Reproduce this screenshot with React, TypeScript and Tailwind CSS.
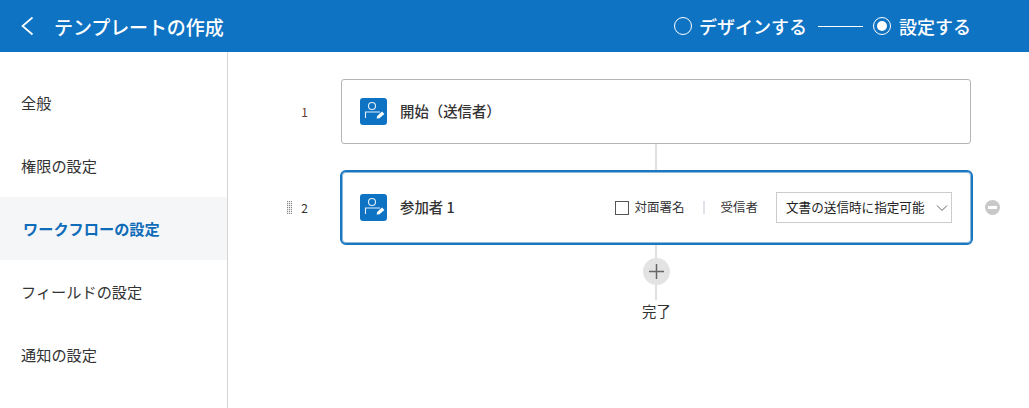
import React from "react";

const PersonIcon = () => (
  <span className="flex h-[27px] w-[27px] shrink-0 items-center justify-center rounded-[3px] bg-[#0f73c4]">
    <svg width="27" height="27" viewBox="0 0 27 27" fill="none">
      <circle cx="12" cy="8" r="3.5" stroke="#e2eff9" strokeWidth="1.1" />
      <path d="M5.5 20V14H20" stroke="#e2eff9" strokeWidth="1.1" />
      <path d="M16.6 20.6L17.2 18L22 13.6L24.4 16L19.4 20.2Z" fill="#fff" />
    </svg>
  </span>
);

const Grip = () => (
  <svg width="5" height="13" viewBox="0 0 5 13" className="mr-[9px]">
    {[0, 2, 4, 6, 8, 10, 12].map((y) =>
      [0, 2, 4].map((x) => <rect key={`${x}-${y}`} x={x} y={y} width="1.2" height="1.2" fill="#888" />)
    )}
  </svg>
);

const navItems = ["全般", "権限の設定", "ワークフローの設定", "フィールドの設定", "通知の設定"];

export default function App() {
  return (
    <div
      className="flex h-[408px] w-[1029px] flex-col overflow-hidden bg-white text-[#333]"
      style={{ fontFamily: '"Noto Sans CJK JP", "Noto Sans", sans-serif' }}
    >
      <header className="flex h-[52px] shrink-0 items-center bg-[#0f73c4] text-white">
        <svg width="16" height="22" viewBox="0 0 16 22" fill="none" className="ml-[19px]">
          <path d="M13.5 2.5L3.5 11L13.5 19.5" stroke="#fff" strokeWidth="1.7" />
        </svg>
        <h1 className="ml-[19px] text-[19px] font-medium leading-none tracking-[-0.1px]">テンプレートの作成</h1>
        <div className="ml-auto mr-[58px] flex items-center">
          <span className="h-[18px] w-[18px] rounded-full border border-white" />
          <span className="ml-[7px] text-[18px] font-medium leading-none">デザインする</span>
          <span className="ml-[11px] h-px w-[45px] bg-white" />
          <span className="ml-[10px] flex h-[18px] w-[18px] items-center justify-center rounded-full border border-white">
            <span className="h-[10px] w-[10px] rounded-full bg-white" />
          </span>
          <span className="ml-[8px] text-[18px] font-medium leading-none">設定する</span>
        </div>
      </header>

      <div className="flex min-h-0 flex-1">
        <nav className="w-[228px] shrink-0 border-r border-[#d4d4d4] pt-[19px]">
          {navItems.map((item, i) => (
            <div
              key={item}
              className={
                i === 2
                  ? "flex h-[63px] items-center bg-[#f5f6f8] pl-[23px] text-[15.2px] font-bold text-[#0f6cb8]"
                  : "flex h-[63px] items-center pl-[21px] text-[15.2px] text-[#333]"
              }
            >
              {item}
            </div>
          ))}
        </nav>

        <main className="flex flex-1 flex-col pt-[27px]">
          <div className="flex items-center">
            <div className="flex w-[112px] justify-end pr-[32px] text-[12px] leading-none text-[#6b3a2e]">1</div>
            <div className="ml-px flex h-[65px] w-[630px] items-center rounded-[3px] border border-[#b5b5b5] pl-[18px]">
              <PersonIcon />
              <span className="ml-[13px] mb-px text-[14.4px] font-medium">開始（送信者）</span>
            </div>
          </div>

          <div className="ml-[427px] h-[26px] w-[2px] bg-[#e0e0e0]" />

          <div className="flex items-center">
            <div className="flex w-[112px] items-center justify-end pr-[32px] text-[12px] leading-none text-[#333]">
              <Grip />2
            </div>
            <div className="flex h-[75px] w-[633px] items-center rounded-[6px] border-2 border-[#1a78c2] pl-[18px] pr-[19px] shadow-[inset_0_0_0_1px_#8fb8d8]">
              <PersonIcon />
              <span className="ml-[13px] mb-[2px] text-[14.4px] font-medium">参加者 1</span>
              <span className="ml-auto h-[14px] w-[14px] border border-[#555]" />
              <span className="ml-[5px] mb-px text-[12.5px]">対面署名</span>
              <span className="ml-[19px] h-[13px] w-[2px] bg-[#dde3e8]" />
              <span className="ml-[15px] mb-px text-[12.5px]">受信者</span>
              <div className="ml-[18px] flex h-[31px] w-[176px] items-center justify-between border border-[#ccc] pl-[9px] pr-[3px]">
                <span className="whitespace-nowrap text-[12.6px] text-[#222]">文書の送信時に指定可能</span>
                <svg width="12" height="8" viewBox="0 0 12 8" fill="none">
                  <path d="M1 1.5L6 6.5L11 1.5" stroke="#666" strokeWidth="1" />
                </svg>
              </div>
            </div>
            <span className="ml-[12px] flex h-[15px] w-[15px] items-center justify-center rounded-full bg-[#c8c8c8]">
              <span className="h-[3px] w-[9px] bg-white" />
            </span>
          </div>

          <div className="ml-[427px] h-[13px] w-[2px] bg-[#e0e0e0]" />
          <div className="ml-[415px] flex h-[27px] w-[27px] items-center justify-center rounded-full bg-[#e3e3e3]">
            <svg width="15" height="15" viewBox="0 0 15 15" fill="none">
              <path d="M7.5 0V15M0 7.5H15" stroke="#666" strokeWidth="1.5" />
            </svg>
          </div>
          <div className="ml-[427px] h-[15px] w-[2px] bg-[#e0e0e0]" />
          <div className="ml-[414px] mt-[4px] text-[14.4px] leading-none text-[#333]">完了</div>
        </main>
      </div>
    </div>
  );
}
